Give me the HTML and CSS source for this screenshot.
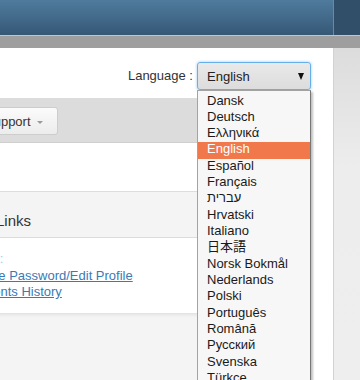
FILE: index.html
```html
<!DOCTYPE html>
<html lang="en">
<head>
    <meta charset="UTF-8">
    <meta name="viewport" content="width=device-width, initial-scale=1.0">
    <title>Client Area</title>
    <link rel="stylesheet" href="styles.css">
</head>
<body>
    <div class="topbar">
        <div class="topbar-main"></div>
        <div class="topbar-side"></div>
    </div>
    <div class="subbar"></div>
    <div class="layout">
        <div class="main">
            <div class="lang-row">
                <span class="lang-label">Language :</span>
                <div class="lang-select">
                    <div class="select-box">
                        <span>English</span>
                        <span class="select-arrow"></span>
                    </div>
                    <ul class="select-list">
                        <li>Dansk</li>
                        <li>Deutsch</li>
                        <li>Ελληνικά</li>
                        <li class="active">English</li>
                        <li>Español</li>
                        <li>Français</li>
                        <li>עברית</li>
                        <li>Hrvatski</li>
                        <li>Italiano</li>
                        <li>日本語</li>
                        <li>Norsk Bokmål</li>
                        <li>Nederlands</li>
                        <li>Polski</li>
                        <li>Português</li>
                        <li>Română</li>
                        <li>Русский</li>
                        <li>Svenska</li>
                        <li>Türkce</li>
                    </ul>
                </div>
            </div>
            <div class="content">
                <div class="toolbar">
                    <button class="tool-btn">Support <span class="caret"></span></button>
                </div>
                <div class="spacer"></div>
                <div class="panel-head">Links</div>
                <div class="panel-body">
                    <a href="#" class="faded">Orders:</a>
                    <a href="#">Change Password/Edit Profile</a>
                    <a href="#">Payments History</a>
                </div>
                <div class="rest"></div>
            </div>
        </div>
        <div class="side"></div>
    </div>
</body>
</html>
```

FILE: styles.css
```css
body {
    margin: 0;
    width: 360px;
    height: 380px;
    overflow: hidden;
    font-family: "Liberation Sans", Arial, "Noto Sans CJK JP", sans-serif;
    font-size: 13px;
    color: #333;
}

.topbar {
    display: flex;
    height: 35px;
    border-bottom: 1px solid #b9c8d4;
}

.topbar-main {
    flex: 1;
    background: linear-gradient(#4f7b9c, #365877);
}

.topbar-side {
    width: 26px;
    border-left: 1px solid #6a8aa4;
    background: #324f6a;
}

.subbar {
    height: 12px;
    background: #9e9e9e;
}

.layout {
    display: flex;
    height: 332px;
}

.main {
    width: 333px;
    background: #fff;
    position: relative;
    overflow: hidden;
}

.side {
    flex: 1;
    border-left: 1px solid #d2d2d2;
    background: linear-gradient(#dcdcdc, #ededed 120px, #eeeeee);
}

.lang-row {
    display: flex;
    justify-content: flex-end;
    height: 36px;
    padding: 14px 22px 0 0;
}

.lang-label {
    line-height: 28px;
    margin-right: 4px;
}

.lang-select {
    position: relative;
    width: 114px;
}

.select-box {
    display: flex;
    justify-content: space-between;
    align-items: center;
    box-sizing: border-box;
    height: 28px;
    padding: 0 6px 0 9px;
    border: 1px solid #66afe9;
    border-radius: 3px;
    background: linear-gradient(#e9e9e9, #dcdcdc);
    box-shadow: 0 0 3px rgba(102, 175, 233, 0.7);
    color: #222;
}

.select-arrow {
    width: 0;
    height: 0;
    border-left: 3.5px solid transparent;
    border-right: 3.5px solid transparent;
    border-top: 7px solid #111;
    margin-top: 1px;
}

.select-list {
    position: absolute;
    top: 28px;
    left: 0;
    width: 114px;
    box-sizing: border-box;
    margin: 0;
    padding: 2.5px 0 0;
    list-style: none;
    background: #f7f7f7;
    border: 1px solid #a3a3a3;
    border-right-color: #777;
    box-shadow: 2px 2px 2px rgba(0, 0, 0, 0.25);
    z-index: 2;
}

.select-list li {
    height: 14.33px;
    line-height: 14.33px;
    padding: 0 0 2px 9px;
    color: #1a1a1a;
    white-space: nowrap;
}

.select-list li.active {
    background: #f0784a;
    color: #fff;
}

.content {
    width: 300px;
    margin-left: -40px;
}

.toolbar {
    height: 45px;
    padding: 9px 0 0 12px;
    box-sizing: border-box;
    background: #dcdcdc;
    border-bottom: 1px solid #cfcfcf;
}

.tool-btn {
    height: 28px;
    padding: 0 14px 0 12px;
    border: 1px solid #cdcdcd;
    border-radius: 3px;
    background: linear-gradient(#fbfbfb, #ececec);
    font-family: inherit;
    font-size: 13px;
    color: #333;
}

.caret {
    display: inline-block;
    vertical-align: middle;
    margin-left: 3px;
    border-left: 3px solid transparent;
    border-right: 3px solid transparent;
    border-top: 3px solid #999;
}

.spacer {
    height: 48px;
    border-bottom: 1px solid #ddd;
}

.panel-head {
    height: 46px;
    box-sizing: border-box;
    padding: 20px 0 0 36px;
    line-height: 18px;
    font-size: 15px;
    background: #f4f4f4;
    border-bottom: 1px solid #ddd;
}

.panel-body {
    display: flex;
    flex-direction: column;
    align-items: flex-start;
    padding: 13px 0 12px;
    line-height: 16.5px;
    background: #fff;
    box-shadow: 0 2px 3px rgba(0, 0, 0, 0.08);
    position: relative;
}

.panel-body a {
    color: #3a7ab5;
}

.panel-body a.faded {
    color: #a3cbeb;
    text-decoration: none;
}

.rest {
    height: 80px;
    background: #f4f4f4;
}
```
